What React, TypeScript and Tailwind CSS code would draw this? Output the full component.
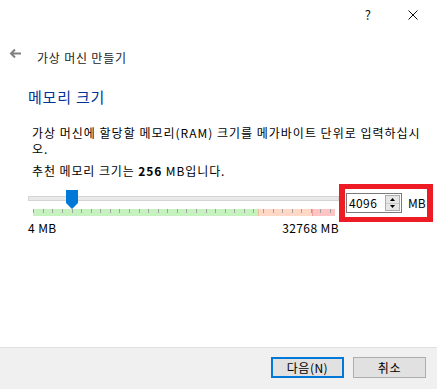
import React from 'react';

const TickBar: React.FC = () => {
  const ticks: number[] = [];
  for (let x = 5.3; x < 307; x += 9.57) ticks.push(Math.round(x) + 0.5);
  return (
    <svg width="311" height="7" className="block">
      <rect x="5" y="0" width="225" height="7" fill="#c6f2bf" />
      <rect x="230" y="0" width="54" height="7" fill="#ffd9c6" />
      <rect x="284" y="0" width="23" height="7" fill="#ffc4c4" />
      <line x1="230.5" y1="0" x2="230.5" y2="7" stroke="#f0c0a0" />
      <line x1="284.5" y1="0" x2="284.5" y2="7" stroke="#f0a0a0" />
      {ticks.map((t) => (
        <line key={t} x1={t} y1="0" x2={t} y2="4" stroke="#a2a2a2" />
      ))}
    </svg>
  );
};

const App: React.FC = () => {
  return (
    <div
      className="w-[437px] h-[389px] bg-white flex flex-col text-[12px] text-black"
      style={{ fontFamily: '"Noto Sans CJK KR", "Liberation Sans", sans-serif' }}
    >
      <div className="flex-1 flex flex-col">
        {/* Title bar */}
        <div className="h-[30px] flex items-center justify-end pr-[19px]">
          <span className="text-[13px] leading-4 text-[#111]">?</span>
          <svg width="10" height="10" className="ml-[37px]" viewBox="0 0 10 10">
            <path d="M0.5 0.5L9.5 9.5M9.5 0.5L0.5 9.5" stroke="#111" strokeWidth="1" fill="none" />
          </svg>
        </div>

        {/* Back + wizard title */}
        <div className="flex items-start mt-[18px]">
          <svg width="13" height="11" viewBox="0 0 13 11" className="ml-[9px]">
            <path d="M12 5.5H2M6 1.5L2 5.5L6 9.5" stroke="#808080" strokeWidth="2" fill="none" />
          </svg>
          <span className="ml-[15px] mt-[2px] leading-4 tracking-[0.8px] text-[#222]">가상 머신 만들기</span>
        </div>

        {/* Page heading */}
        <h1 className="ml-[28px] mt-[21px] text-[15px] leading-5 tracking-[0.8px] text-[#003399]">메모리 크기</h1>

        <p className="ml-[32px] mt-[18px] leading-4 tracking-[1px] whitespace-nowrap">
          가상 머신에 할당할 메모리(RAM) 크기를 메가바이트 단위로 입력하십시
          <br />
          오.
        </p>
        <p className="ml-[32px] mt-[6px] leading-4 tracking-[0.9px] whitespace-nowrap">
          추천 메모리 크기는 <b>256</b> MB입니다.
        </p>

        {/* Slider + spin box */}
        <div className="flex mt-[5px] ml-[28px]">
          <div className="w-[311px] relative">
            <div className="mt-[12px] h-[5px] border border-[#d4d4d4] bg-[#e9e9e9]" />
            <svg width="12" height="19" viewBox="0 0 12 19" className="absolute left-[38px] top-[6px]">
              <polygon points="0,0 12,0 12,13 6,19 0,13" fill="#0078d7" />
            </svg>
            <div className="mt-[8px]">
              <TickBar />
            </div>
            <div className="mt-[4px] flex justify-between leading-4 tracking-[0.4px]">
              <span>4 MB</span>
              <span>32768 MB</span>
            </div>
          </div>

          <div className="w-[94px] h-[38px] border-y-[5px] border-x-[6px] border-[#ed1c24] flex items-start pl-[1px] pt-[4px]">
            <div className="w-[56px] h-[20px] border border-[#7a7a7a] bg-white flex items-center">
              <span className="ml-[2px] flex-1 leading-4 tracking-[0.4px]">4096</span>
              <div className="w-[15px] h-[16px] mr-[1px] border border-[#adadad] bg-[#e6e6e6] flex flex-col">
                <div className="flex-1 flex items-center justify-center border-b border-[#c8c8c8]">
                  <svg width="5" height="3" viewBox="0 0 5 3"><polygon points="2.5,0 5,3 0,3" fill="#000" /></svg>
                </div>
                <div className="flex-1 flex items-center justify-center">
                  <svg width="5" height="3" viewBox="0 0 5 3"><polygon points="0,0 5,0 2.5,3" fill="#000" /></svg>
                </div>
              </div>
            </div>
            <span className="ml-[6px] mt-[2px] leading-4">MB</span>
          </div>
        </div>
      </div>

      {/* Footer */}
      <div className="h-[42px] border-t border-[#dfdfdf] bg-[#f0f0f0] flex items-start justify-end pt-[9px] pr-[11px] gap-[9px]">
        <button className="w-[73px] h-[21px] border-2 border-[#0078d7] bg-[#e1e1e1] leading-4 tracking-[0.5px] flex items-center justify-center">
          다음(N)
        </button>
        <button className="w-[73px] h-[21px] border border-[#adadad] bg-[#e1e1e1] leading-4 tracking-[0.8px] flex items-center justify-center">
          취소
        </button>
      </div>
    </div>
  );
};

export default App;
